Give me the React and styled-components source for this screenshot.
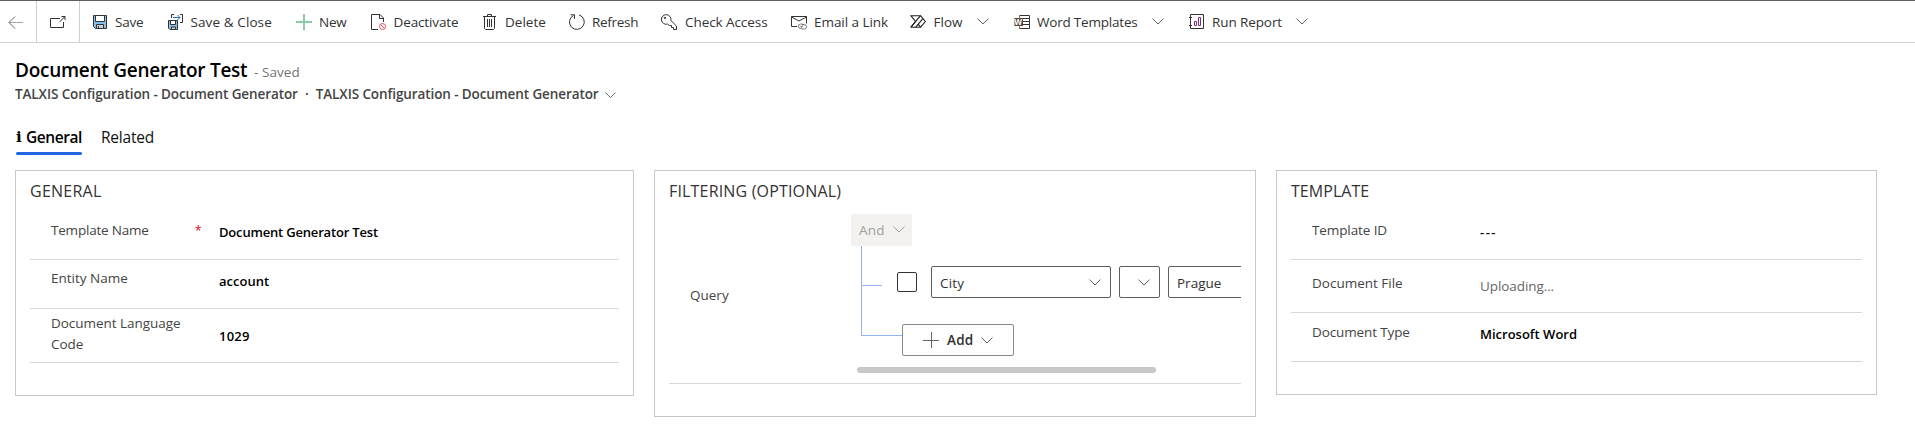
import React from 'react';
import styled, { createGlobalStyle } from 'styled-components';

const GlobalStyle = createGlobalStyle`
  *, *::before, *::after { box-sizing: border-box; }
  body {
    margin: 0;
    background: #fff;
    color: #333;
    font-family: "Open Sans", "Noto Sans", sans-serif;
    font-size: 13.5px;
    overflow: hidden;
  }
`;

const Page = styled.div`
  height: 444px;
  border-top: 1px solid #605e5c;
  overflow: hidden;
`;

const Toolbar = styled.div`
  display: flex;
  align-items: stretch;
  height: 42px;
  border-bottom: 1px solid #d2d2d2;
`;

const NavButton = styled.div`
  display: flex;
  align-items: center;
  justify-content: center;
  width: ${(p) => p.$width}px;
  padding-right: ${(p) => p.$shift || 0}px;
  border-right: 1px solid #cfcfcf;
`;

const CommandList = styled.div`
  display: flex;
  align-items: center;
  margin-left: 12px;
`;

const Command = styled.div`
  display: flex;
  align-items: center;
  gap: ${(p) => p.$gap}px;
  width: ${(p) => p.$width}px;
  height: 40px;
`;

const CommandIcon = styled.span`
  display: flex;
  width: 16px;
  height: 16px;
  flex: none;
`;

const Label = styled.span`
  line-height: 20px;
  white-space: nowrap;
  letter-spacing: ${(p) => p.$track || 0}px;
`;

const CommandChevron = styled.span`
  display: flex;
  margin-left: ${(p) => p.$gap}px;
`;

const Header = styled.header`
  padding: 14px 15px 0;
`;

const TitleRow = styled.div`
  display: flex;
  align-items: baseline;
  height: 26px;
`;

const Title = styled.h1`
  margin: 0;
  font-size: 19px;
  line-height: 26px;
  font-weight: 600;
  letter-spacing: -0.26px;
  color: #000;
  width: 239px;
  white-space: nowrap;
`;

const SavedState = styled.span`
  color: #767472;
  letter-spacing: 0.05px;
`;

const Breadcrumb = styled.div`
  display: flex;
  align-items: center;
  margin-top: 1px;
  height: 20px;
  line-height: 20px;
  font-weight: 600;
  letter-spacing: -0.1px;
  color: #444;
  white-space: nowrap;
`;

const Dot = styled.span`
  width: 18px;
  text-align: center;
`;

const BreadcrumbChevron = styled.span`
  display: flex;
  margin: 2px 0 0 6px;
`;

const Tabs = styled.nav`
  display: flex;
  margin-top: 22px;
  gap: 19px;
  padding-left: 1px;
`;

const Tab = styled.div`
  height: 29px;
  font-size: 15.5px;
  line-height: 22px;
  white-space: nowrap;
  color: ${(p) => (p.$active ? '#000' : '#111')};
  font-weight: ${(p) => (p.$active ? 600 : 400)};
  letter-spacing: ${(p) => (p.$active ? -0.42 : -0.22)}px;
  display: flex;
  flex-direction: column;
  justify-content: space-between;
  width: ${(p) => p.$width}px;
  &::after {
    content: "";
    height: 3px;
    border-radius: 2px;
    background: ${(p) => (p.$active ? '#2266e3' : 'transparent')};
  }
`;

const TabText = styled.span`
  display: flex;
`;

const InfoGlyph = styled.span`
  width: 10px;
  font: bold 15px/22px "DejaVu Serif", serif;
  letter-spacing: 0;
`;

const Sections = styled.main`
  display: flex;
  align-items: flex-start;
  gap: 20px;
  margin: 15px 0 0 15px;
`;

const Card = styled.section`
  width: ${(p) => p.$width}px;
  height: ${(p) => p.$height}px;
  border: 1px solid #c8c8c8;
  padding: 9px 14px 0 14px;
`;

const CardTitle = styled.h2`
  margin: 0 0 9px;
  font-size: 16px;
  line-height: 22px;
  font-weight: 400;
  letter-spacing: ${(p) => p.$track}px;
  color: #333;
`;

const Field = styled.div`
  display: grid;
  grid-template-columns: 144px 24px 1fr;
  height: ${(p) => p.$height}px;
  padding: ${(p) => p.$top}px 0 0 21px;
  border-bottom: 1px solid #d6d6d6;
`;

const FieldLabel = styled.div`
  width: 140px;
  line-height: 21px;
  letter-spacing: ${(p) => p.$track || 0}px;
  color: #444;
`;

const Required = styled.span`
  color: #e00b1c;
  line-height: 21px;
  font-size: 12px;
`;

const FieldValue = styled.div`
  margin-top: ${(p) => p.$offset}px;
  line-height: 21px;
  font-size: 13px;
  font-weight: 600;
  color: #000;
  letter-spacing: ${(p) => p.$track || 0}px;
`;

const Status = styled(FieldValue)`
  font-size: 13.5px;
  font-weight: 400;
  color: #666;
`;

const QueryField = styled.div`
  display: flex;
  height: 173px;
  padding-left: 21px;
  border-bottom: 1px solid #d6d6d6;
`;

const QueryLabel = styled(FieldLabel)`
  width: 161px;
  padding-top: 74px;
`;

const QueryBuilder = styled.div`
  flex: 1;
  min-width: 0;
  overflow: hidden;
  padding-top: 3px;
`;

const GroupOperator = styled.div`
  display: flex;
  align-items: center;
  gap: 8px;
  width: 61px;
  height: 32px;
  padding: 0 0 1px 8px;
  border-radius: 2px;
  background: #f3f2f1;
  color: #a19f9d;
`;

const Tree = styled.div`
  display: flex;
  height: 121px;
  padding-left: 10px;
`;

const Rail = styled.div`
  flex: none;
  width: 41px;
`;

const Branch = styled.div`
  width: ${(p) => p.$width}px;
  height: ${(p) => p.$height}px;
  border: solid #94b4f4;
  border-width: 0 0 1px 1px;
`;

const Conditions = styled.div`
  flex: none;
`;

const ConditionRow = styled.div`
  display: flex;
  align-items: center;
  margin: 20px 0 0 -5px;
`;

const Checkbox = styled.div`
  width: 20px;
  height: 20px;
  margin-right: 14px;
  border: 1px solid #323130;
  border-radius: 2px;
`;

const Select = styled.div`
  display: flex;
  align-items: center;
  justify-content: space-between;
  width: ${(p) => p.$width}px;
  height: 32px;
  margin-right: 8px;
  padding: 0 9px 0 8px;
  border: 1px solid #605e5c;
  border-radius: 2px;
  color: #323130;
  & > svg { margin-left: auto; }
  & > span { padding-top: 2px; }
`;

const AddButton = styled.div`
  display: flex;
  align-items: center;
  width: 112px;
  height: 32px;
  margin-top: 26px;
  padding-left: 20px;
  border: 1px solid #8a8886;
  border-radius: 2px;
  color: #323130;
  font-weight: 600;
  & > span { margin: 0 8px 0 8px; }
`;

const ScrollThumb = styled.div`
  width: 299px;
  height: 6px;
  margin-left: 6px;
  border-radius: 3px;
  background: #c8c8c8;
`;

const Chevron = ({ color = '#605e5c' }) => (
  <svg width="12" height="7" viewBox="0 0 12 7" fill="none" stroke={color} strokeWidth="1">
    <path d="M0.5 0.6 6 6 11.5 0.6" />
  </svg>
);

const SmallChevron = () => (
  <svg width="11" height="7" viewBox="0 0 11 7" fill="none" stroke="#555" strokeWidth="0.9">
    <path d="M0.5 0.6 5.5 5.6 10.5 0.6" />
  </svg>
);

const Icon = ({ children, ...rest }) => (
  <svg width="16" height="16" viewBox="0 0 16 16" fill="none" stroke="#333" strokeWidth="1" {...rest}>
    {children}
  </svg>
);

const BackIcon = () => (
  <Icon>
    <path d="M1 8.5H15" stroke="#a5a5a5" />
    <path d="M7 2.5 1 8.5l6 6" stroke="#666" />
  </Icon>
);

const PopOutIcon = () => (
  <Icon>
    <path d="M10 4.5H.5v9h13V8" />
    <path d="M9.5 8 15 2.5M11.5 2.5H15V6" />
  </Icon>
);

const SaveIcon = () => (
  <Icon>
    <path d="M1.5 1.5h13v13h-11l-2-2z" fill="#83beec" />
    <path d="M3.5 1.5h9v6h-9z" fill="#fff" />
    <path d="M4.5 14.5v-4h7v4z" fill="#d0d0d0" />
    <path d="M6.5 12v2.5" />
  </Icon>
);

const SaveCloseIcon = () => (
  <Icon>
    <path d="M1.5 6.5h9v9H3l-1.5-1.5z" fill="#83beec" />
    <path d="M3.5 6.5h5v4h-5z" fill="#fff" />
    <path d="M4.5 15.5V13h4v2.5z" fill="#d0d0d0" />
    <path d="M4.500 4V.5H7M13 .5h2.500v8H13" />
    <path d="M6 3.500h7M10.500 1 13 3.500 10.500 6" stroke="#1e74c8" />
  </Icon>
);

const NewIcon = () => (
  <Icon stroke="#8bcba5" strokeWidth="2">
    <path d="M8 0v16M0 8h16" />
  </Icon>
);

const DeactivateIcon = () => (
  <Icon>
    <path d="M8 15.5H1.500V.5H10l3.500 3.500v4" />
    <path d="M9.500 .5v4h4" />
    <circle cx="12.500" cy="12.500" r="3" stroke="#e8505b" />
    <path d="m10.400 10.400 4.200 4.200" stroke="#e8505b" />
  </Icon>
);

const DeleteIcon = () => (
  <Icon>
    <path d="M1 2.500h13M5.500 2.500v-2h4v2M2.500 2.500v12l1 1h8l1-1v-12M5.500 5v8M7.500 5v8M9.500 5v8" />
  </Icon>
);

const RefreshIcon = () => (
  <Icon>
    <path d="M10 .9A7.400 7.400 0 1 1 4.500 1.400" />
    <path d="M1.500 .8h4v4" />
  </Icon>
);

const KeyIcon = () => (
  <Icon>
    <path d="M6.500 10.100A4.800 4.800 0 1 1 9.900 6.500L15.500 12v3.500h-3v-2h-2v-2H8.500z" />
    <circle cx="4" cy="4" r=".8" />
  </Icon>
);

const EmailLinkIcon = () => (
  <Icon>
    <path d="M6 12.500H.5v-10h15v7" />
    <path d="m.5 3 7.500 4 7.500-4" />
    <path d="M11.500 10H9.700a2.300 2.300 0 0 0 0 4.600h.8M9.300 12.400h2a1.700 1.700 0 0 0 0-2.400M11.800 10.500h1.400a2.300 2.300 0 0 1 0 4.600h-2a1.800 1.800 0 0 1 0-2.600" stroke="#777" />
  </Icon>
);

const FlowIcon = () => (
  <Icon stroke="#222" strokeWidth="1.150" strokeLinejoin="round">
    <path d="M.8 1.700h9.700L15.400 7.500l-4.800 5.700H1L5.600 7.500z" />
    <path d="M10.500 1.700 1 13.200M12.900 4.600 5.700 13.200M10.600 13.200 8.300 10.300" />
  </Icon>
);

const WordLetter = styled.text`
  font: bold 8px "Open Sans", sans-serif;
  fill: #fff;
  stroke: none;
`;

const WordIcon = () => (
  <Icon>
    <path d="M5 1.500h10.500v13H5M9 4.500h6.500M9 7.500h6.500M9 10.500h6.500" />
    <path d="M5.500 1v3M5.500 12v3" stroke="#b87328" />
    <path d="M0 4h9v8H0z" fill="#4a4a4a" stroke="none" />
    <path d="M.5 4v8" stroke="#c08a50" />
    <WordLetter x="0.300" y="10.900">W</WordLetter>
  </Icon>
);

const ReportIcon = () => (
  <Icon>
    <path d="M2.500 .5h13v14h-13zM1 3.500h3M1 11.500h3" />
    <path d="M6.500 7.500h2v4h-2z" stroke="#7a2f7e" />
    <path d="M10.500 3.500h2v8h-2z" stroke="#7a2f7e" />
  </Icon>
);

const PlusIcon = () => (
  <Icon stroke="#666">
    <path d="M8.500 0v16M0 8.500h16" />
  </Icon>
);

const commands = [
  { text: 'Save', icon: SaveIcon, width: 75, track: -0.18, gap: 7 },
  { text: 'Save & Close', icon: SaveCloseIcon, width: 129, track: 0.1, gap: 7.5 },
  { text: 'New', icon: NewIcon, width: 74, track: -0.2, gap: 7 },
  { text: 'Deactivate', icon: DeactivateIcon, width: 112, track: -0.12, gap: 7.5 },
  { text: 'Delete', icon: DeleteIcon, width: 87, track: 0.02, gap: 7 },
  { text: 'Refresh', icon: RefreshIcon, width: 92, track: -0.3, gap: 7 },
  { text: 'Check Access', icon: KeyIcon, width: 130, track: -0.07, gap: 8 },
  { text: 'Email a Link', icon: EmailLinkIcon, width: 119, track: -0.05, gap: 7 },
  { text: 'Flow', icon: FlowIcon, width: 104, track: 0, gap: 7.5, chevronGap: 7 },
  { text: 'Word Templates', icon: WordIcon, width: 174, track: -0.2, gap: 7, chevronGap: 7 },
  { text: 'Run Report', icon: ReportIcon, width: 120, track: -0.1, gap: 8, chevronGap: 6 },
];

export default function App() {
  return (
    <Page>
      <GlobalStyle />
      <Toolbar>
        <NavButton $width={37} $shift={4}><BackIcon /></NavButton>
        <NavButton $width={43}><PopOutIcon /></NavButton>
        <CommandList>
          {commands.map(({ text, icon: Glyph, width, track, gap, chevronGap }) => (
            <Command key={text} $width={width} $gap={gap}>
              <CommandIcon><Glyph /></CommandIcon>
              <Label $track={track}>{text}</Label>
              {chevronGap && <CommandChevron $gap={chevronGap}><Chevron /></CommandChevron>}
            </Command>
          ))}
        </CommandList>
      </Toolbar>

      <Header>
        <TitleRow>
          <Title>Document Generator Test</Title>
          <SavedState>- Saved</SavedState>
        </TitleRow>
        <Breadcrumb>
          <span>TALXIS Configuration - Document Generator</span>
          <Dot>·</Dot>
          <span>TALXIS Configuration - Document Generator</span>
          <BreadcrumbChevron><SmallChevron /></BreadcrumbChevron>
        </Breadcrumb>
        <Tabs>
          <Tab $active $width={66}>
            <TabText><InfoGlyph>i</InfoGlyph>General</TabText>
          </Tab>
          <Tab $width={54}><TabText>Related</TabText></Tab>
        </Tabs>
      </Header>

      <Sections>
        <Card $width={619} $height={226}>
          <CardTitle $track={0.25}>GENERAL</CardTitle>
          <Field $height={49} $top={9}>
            <FieldLabel $track={-0.2}>Template Name</FieldLabel>
            <Required>*</Required>
            <FieldValue $offset={2} $track={-0.18}>Document Generator Test</FieldValue>
          </Field>
          <Field $height={49} $top={8}>
            <FieldLabel>Entity Name</FieldLabel>
            <span />
            <FieldValue $offset={3}>account</FieldValue>
          </Field>
          <Field $height={54} $top={4}>
            <FieldLabel $track={-0.04}>Document Language Code</FieldLabel>
            <span />
            <FieldValue $offset={13} $track={0.25}>1029</FieldValue>
          </Field>
        </Card>

        <Card $width={602} $height={247}>
          <CardTitle $track={0.17}>FILTERING (OPTIONAL)</CardTitle>
          <QueryField>
            <QueryLabel>Query</QueryLabel>
            <QueryBuilder>
              <GroupOperator><Label $track={0.2}>And</Label><Chevron color="#a19f9d" /></GroupOperator>
              <Tree>
                <Rail>
                  <Branch $width={21} $height={40} />
                  <Branch $width={41} $height={50} />
                </Rail>
                <Conditions>
                  <ConditionRow>
                    <Checkbox />
                    <Select $width={180}><Label $track={0.2}>City</Label><Chevron /></Select>
                    <Select $width={41}><Chevron /></Select>
                    <Select $width={180}><Label>Prague</Label></Select>
                  </ConditionRow>
                  <AddButton><PlusIcon /><Label $track={0.2}>Add</Label><Chevron /></AddButton>
                </Conditions>
              </Tree>
              <ScrollThumb />
            </QueryBuilder>
          </QueryField>
        </Card>

        <Card $width={601} $height={225}>
          <CardTitle $track={0.05}>TEMPLATE</CardTitle>
          <Field $height={49} $top={9}>
            <FieldLabel $track={-0.1}>Template ID</FieldLabel>
            <span />
            <FieldValue $offset={2} $track={1.5}>---</FieldValue>
          </Field>
          <Field $height={53} $top={13}>
            <FieldLabel>Document File</FieldLabel>
            <span />
            <Status $offset={3} $track={-0.08}>Uploading...</Status>
          </Field>
          <Field $height={49} $top={9}>
            <FieldLabel $track={-0.12}>Document Type</FieldLabel>
            <span />
            <FieldValue $offset={2} $track={0}>Microsoft Word</FieldValue>
          </Field>
        </Card>
      </Sections>
    </Page>
  );
}
